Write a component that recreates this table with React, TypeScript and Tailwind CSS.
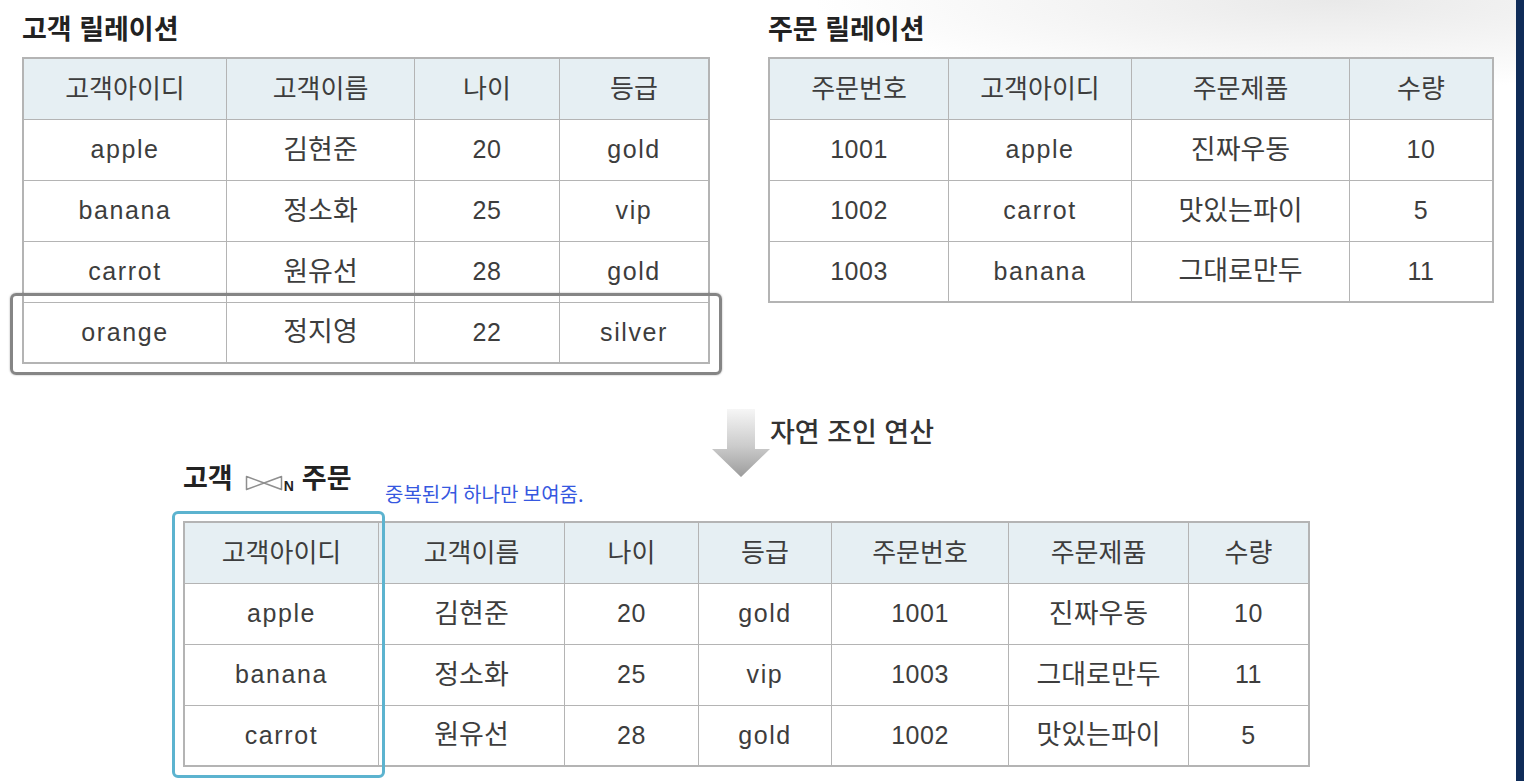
const F = "font-['Liberation_Sans','Noto_Sans_CJK_KR',sans-serif]";

type TableProps = {
  cols: string;
  head: string[];
  rows: string[][];
};

const isKo = (s: string) => /[가-힣]/.test(s);
const isNum = (s: string) => /^[0-9]+$/.test(s);

function cellText(s: string, header: boolean) {
  if (header) return 'text-[26px]';
  if (isKo(s)) return 'text-[27px]';
  if (isNum(s)) return 'text-[25px] tracking-[0.5px]';
  return 'text-[25px] tracking-[1.6px]';
}

function RelTable({ cols, head, rows }: TableProps) {
  const all = [head, ...rows];
  return (
    <div className={`grid ${cols} border-t-2 border-l-2 border-[#b4b4b4]`}>
      {all.map((r, ri) =>
        r.map((c, ci) => (
          <div
            key={`${ri}-${ci}`}
            className={`h-[61px] flex items-center justify-center text-[#3d3d3d] border-[#b4b4b4] ${cellText(c, ri === 0)} ${
              ri === 0 ? 'bg-[#e6eff3]' : 'bg-white'
            } ${ci === r.length - 1 ? 'border-r-2' : 'border-r'} ${ri === all.length - 1 ? 'border-b-2' : 'border-b'}`}
          >
            {c}
          </div>
        ))
      )}
    </div>
  );
}

function DownArrow() {
  return (
    <svg width="58" height="68" viewBox="0 0 58 68" className="shrink-0">
      <defs>
        <linearGradient id="arr" x1="0" y1="0" x2="0" y2="1">
          <stop offset="0" stopColor="#f6f6f6" />
          <stop offset="0.55" stopColor="#cbcbcb" />
          <stop offset="1" stopColor="#9c9c9c" />
        </linearGradient>
      </defs>
      <path d="M15 0 H43 V40 H58 L29 68 L0 40 H15 Z" fill="url(#arr)" />
    </svg>
  );
}

function BowTie() {
  return (
    <svg width="38" height="16" viewBox="0 0 38 16" className="shrink-0">
      <path d="M1.5 1.5 L19 8 L1.5 14.5 Z M36.5 1.5 L19 8 L36.5 14.5 Z" fill="none" stroke="#8f8f8f" strokeWidth="1.5" strokeLinejoin="round" />
    </svg>
  );
}

export default function App() {
  return (
    <div className={`h-[781px] w-full flex overflow-hidden bg-white ${F}`}>
      <div className="flex-1 flex flex-col bg-[radial-gradient(ellipse_520px_90px_at_88%_0%,#e9e9e9,#ffffff)]">
        {/* top: two relations */}
        <div className="flex pl-[22px] pt-[14px] gap-[58px]">
          <div className="relative">
            <h2 className="h-[32px] leading-[32px] mb-[11px] text-[27px] font-bold text-[#222]">고객 릴레이션</h2>
            <RelTable
              cols="grid-cols-[203px_188px_145px_150px]"
              head={['고객아이디', '고객이름', '나이', '등급']}
              rows={[
                ['apple', '김현준', '20', 'gold'],
                ['banana', '정소화', '25', 'vip'],
                ['carrot', '원유선', '28', 'gold'],
                ['orange', '정지영', '22', 'silver'],
              ]}
            />
            <div className="absolute left-[-12px] top-[279px] w-[712px] h-[82px] rounded-[6px] border-[3px] border-[#858585] shadow-[0_0_2px_rgba(0,0,0,0.35)]" />
          </div>
          <div>
            <h2 className="h-[32px] leading-[32px] mb-[11px] text-[27px] font-bold text-[#222]">주문 릴레이션</h2>
            <RelTable
              cols="grid-cols-[179px_183px_218px_144px]"
              head={['주문번호', '고객아이디', '주문제품', '수량']}
              rows={[
                ['1001', 'apple', '진짜우동', '10'],
                ['1002', 'carrot', '맛있는파이', '5'],
                ['1003', 'banana', '그대로만두', '11'],
              ]}
            />
          </div>
        </div>

        {/* arrow */}
        <div className="mt-[45px] h-[52px] pl-[712px] flex items-start">
          <DownArrow />
          <span className="mt-[7px] leading-[34px] text-[27px] font-medium text-[#333]">자연 조인 연산</span>
        </div>

        {/* join result */}
        <div className="pl-[183px] h-[50px] flex items-start">
          <div className="w-[202px] h-[36px] leading-[36px] text-[27px] font-bold text-[#222] flex items-center">
            <span>고객</span>
            <span className="ml-[12px] mt-[8px] flex items-end">
              <BowTie />
              <span className="text-[14px] leading-none ml-[1px] mb-[-2px]">N</span>
            </span>
            <span className="ml-[8px]">주문</span>
          </div>
          <span className="mt-[19px] leading-[28px] text-[20px] text-[#3658e0] font-['Noto_Sans_CJK_KR',sans-serif]">
            중복된거 하나만 보여줌.
          </span>
        </div>

        <div className="mt-[10px] pl-[183px]">
          <div className="relative w-fit">
            <RelTable
              cols="grid-cols-[194px_186px_134px_133px_177px_180px_121px]"
              head={['고객아이디', '고객이름', '나이', '등급', '주문번호', '주문제품', '수량']}
              rows={[
                ['apple', '김현준', '20', 'gold', '1001', '진짜우동', '10'],
                ['banana', '정소화', '25', 'vip', '1003', '그대로만두', '11'],
                ['carrot', '원유선', '28', 'gold', '1002', '맛있는파이', '5'],
              ]}
            />
            <div className="absolute left-[-11px] top-[-10px] w-[213px] h-[267px] rounded-[6px] border-[3px] border-[#5cb3cf]" />
          </div>
        </div>
      </div>
      <div className="w-[8px] bg-[#0f2c58]" />
    </div>
  );
}
